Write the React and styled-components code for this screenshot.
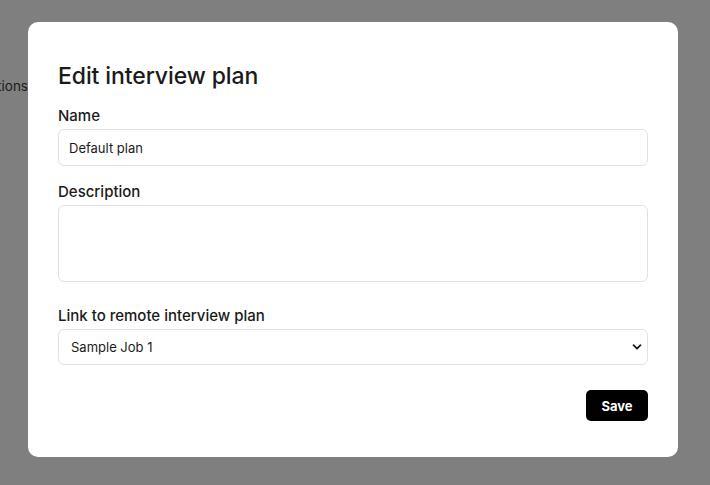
import React from "react";
import styled, { createGlobalStyle } from "styled-components";

const Global = createGlobalStyle`
  html, body { margin: 0; padding: 0; background: #fff; }
  body { font-family: Inter, "Noto Sans", sans-serif; color: #1a1a1a; }
  * { box-sizing: border-box; }
`;

const Page = styled.div`
  width: 710px;
  height: 485px;
  overflow: hidden;
`;

const BgClip = styled.div`
  width: 28px;
  margin-top: 77px;
  display: flex;
  justify-content: flex-end;
  overflow: hidden;
  white-space: nowrap;
  font-size: 13.5px;
  line-height: 18px;
  color: #3a3a3a;
`;

const Overlay = styled.div`
  position: fixed;
  inset: 0;
  background: rgba(0, 0, 0, 0.5);
  display: flex;
  align-items: flex-start;
  justify-content: flex-start;
  padding: 22px 0 0 28px;
`;

const Modal = styled.div`
  width: 650px;
  height: 435px;
  background: #fff;
  border-radius: 10px;
  padding: 39px 30px 30px;
  display: flex;
  flex-direction: column;
`;

const Title = styled.h2`
  margin: 0 0 16px;
  font-size: 23px;
  font-weight: 500;
  line-height: 30px;
  letter-spacing: -0.1px;
  color: #1a1a1a;
`;

const Field = styled.div`
  display: flex;
  flex-direction: column;
  gap: 4px;
  margin-bottom: ${(p) => p.$mb || 17}px;
`;

const Label = styled.label`
  font-size: 15px;
  font-weight: 500;
  line-height: 18px;
  color: #1a1a1a;
`;

const Input = styled.input`
  width: 100%;
  height: 37px;
  border: 1px solid #e1e1e1;
  border-radius: 6px;
  padding: 0 10px;
  font-family: inherit;
  font-size: 13px;
  color: #1a1a1a;
  outline: none;
`;

const TextArea = styled.textarea`
  width: 100%;
  height: 77px;
  border: 1px solid #e1e1e1;
  border-radius: 6px;
  padding: 8px 10px;
  font-family: inherit;
  font-size: 13px;
  resize: none;
  outline: none;
  display: block;
`;

const SelectWrap = styled.div`
  position: relative;
  width: 100%;
`;

const Select = styled.select`
  appearance: none;
  width: 100%;
  height: 36px;
  border: 1px solid #e1e1e1;
  border-radius: 6px;
  padding: 0 12px;
  background: #fff;
  font-family: inherit;
  font-size: 13px;
  color: #1a1a1a;
  outline: none;
  display: block;
`;

const Chevron = styled.svg`
  position: absolute;
  right: 6px;
  top: 50%;
  transform: translateY(-50%);
  pointer-events: none;
`;

const Footer = styled.div`
  display: flex;
  justify-content: flex-end;
`;

const Button = styled.button`
  height: 31px;
  width: 62px;
  border: none;
  border-radius: 5px;
  background: #000;
  color: #fff;
  font-family: inherit;
  font-size: 13px;
  font-weight: 700;
  cursor: pointer;
`;

export default function App() {
  return (
    <Page>
      <Global />
      <BgClip>
        <span>Interview questions</span>
      </BgClip>
      <Overlay>
        <Modal>
          <Title>Edit interview plan</Title>
          <Field>
            <Label>Name</Label>
            <Input defaultValue="Default plan" />
          </Field>
          <Field $mb={25}>
            <Label>Description</Label>
            <TextArea />
          </Field>
          <Field $mb={25}>
            <Label>Link to remote interview plan</Label>
            <SelectWrap>
              <Select defaultValue="1">
                <option value="1">Sample Job 1</option>
              </Select>
              <Chevron width="10" height="10" viewBox="0 0 10 10">
                <path d="M1.5 3.2 L5 6.7 L8.5 3.2" fill="none" stroke="#1a1a1a" strokeWidth="1.8" strokeLinecap="round" strokeLinejoin="round" />
              </Chevron>
            </SelectWrap>
          </Field>
          <Footer>
            <Button>Save</Button>
          </Footer>
        </Modal>
      </Overlay>
    </Page>
  );
}
